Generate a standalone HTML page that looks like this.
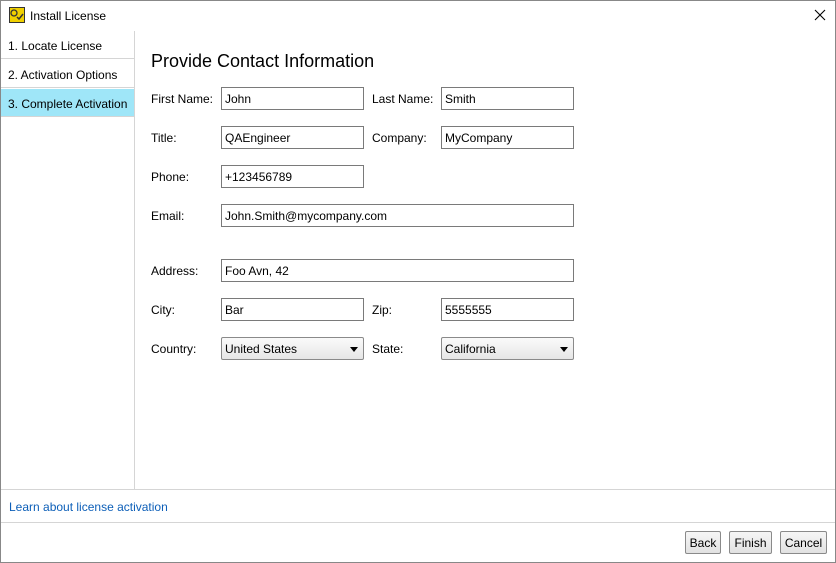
<!DOCTYPE html><html><head><style>
*{box-sizing:border-box;margin:0;padding:0}
body{width:836px;height:563px;background:#fff;font-family:"Liberation Sans",sans-serif;font-size:12px;color:#000;position:relative;overflow:hidden}
.win{position:absolute;left:0;top:0;width:836px;height:563px;border:1px solid #888}
.a{position:absolute}
.side{left:1px;top:31px;width:134px;height:458px;border-right:1px solid #d5d5d5}
.it{position:absolute;left:0;width:133px;height:28px;line-height:30px;padding-left:7px;border-bottom:1px solid #d5d5d5}
.lbl{position:absolute;line-height:25px}
.in{position:absolute;height:23px;border:1px solid #7a7a7a;line-height:23px;padding-left:3px;background:#fff}
.sel{position:absolute;height:23px;border:1px solid #8a8a8a;border-radius:2px;line-height:23px;padding-left:3px;background:linear-gradient(#fafafa,#e6e6e6)}
.sel:after{content:"";position:absolute;right:5px;top:9px;border-left:4px solid transparent;border-right:4px solid transparent;border-top:5px solid #000}
.btn{position:absolute;top:531px;height:23px;border:1px solid #8a8a8a;border-radius:2px;background:linear-gradient(#f6f6f6,#e2e2e2);text-align:center;line-height:23px}
</style></head><body><div class="win"></div>
<div class="a" style="left:9px;top:7px;width:16px;height:16px;background:#f0d000;border:1px solid #333"></div>
<svg class="a" style="left:9px;top:7px" width="16" height="16"><circle cx="5" cy="6" r="3" fill="none" stroke="#333" stroke-width="1.3"/><path d="M8 10l2 2 4-5" fill="none" stroke="#333" stroke-width="1.5"/></svg>
<div class="a" style="left:30px;top:9px">Install License</div>
<svg class="a" style="left:814px;top:9px" width="12" height="12"><path d="M1 1L11 11M11 1L1 11" stroke="#000" stroke-width="1.1"/></svg>
<div class="a side">
<div class="it" style="top:0">1. Locate License</div>
<div class="it" style="top:29px">2. Activation Options</div>
<div class="it" style="top:58px;background:#9fe6f8">3. Complete Activation</div>
</div>
<div class="a" style="left:151px;top:51px;font-size:18px">Provide Contact Information</div>
<div class="lbl" style="left:151px;top:87px">First Name:</div><div class="in" style="left:221px;top:87px;width:143px">John</div>
<div class="lbl" style="left:372px;top:87px">Last Name:</div><div class="in" style="left:441px;top:87px;width:133px">Smith</div>
<div class="lbl" style="left:151px;top:126px">Title:</div><div class="in" style="left:221px;top:126px;width:143px">QAEngineer</div>
<div class="lbl" style="left:372px;top:126px">Company:</div><div class="in" style="left:441px;top:126px;width:133px">MyCompany</div>
<div class="lbl" style="left:151px;top:165px">Phone:</div><div class="in" style="left:221px;top:165px;width:143px">+123456789</div>
<div class="lbl" style="left:151px;top:204px">Email:</div><div class="in" style="left:221px;top:204px;width:353px">John.Smith@mycompany.com</div>
<div class="lbl" style="left:151px;top:259px">Address:</div><div class="in" style="left:221px;top:259px;width:353px">Foo Avn, 42</div>
<div class="lbl" style="left:151px;top:298px">City:</div><div class="in" style="left:221px;top:298px;width:143px">Bar</div>
<div class="lbl" style="left:372px;top:298px">Zip:</div><div class="in" style="left:441px;top:298px;width:133px">5555555</div>
<div class="lbl" style="left:151px;top:337px">Country:</div><div class="sel" style="left:221px;top:337px;width:143px">United States</div>
<div class="lbl" style="left:372px;top:337px">State:</div><div class="sel" style="left:441px;top:337px;width:133px">California</div>
<div class="a" style="left:1px;top:489px;width:834px;height:1px;background:#d5d5d5"></div>
<div class="a" style="left:9px;top:500px;color:#0d5fb8">Learn about license activation</div>
<div class="a" style="left:1px;top:522px;width:834px;height:1px;background:#d5d5d5"></div>
<div class="btn" style="left:685px;width:36px">Back</div>
<div class="btn" style="left:729px;width:43px">Finish</div>
<div class="btn" style="left:780px;width:47px">Cancel</div>
</body></html>
